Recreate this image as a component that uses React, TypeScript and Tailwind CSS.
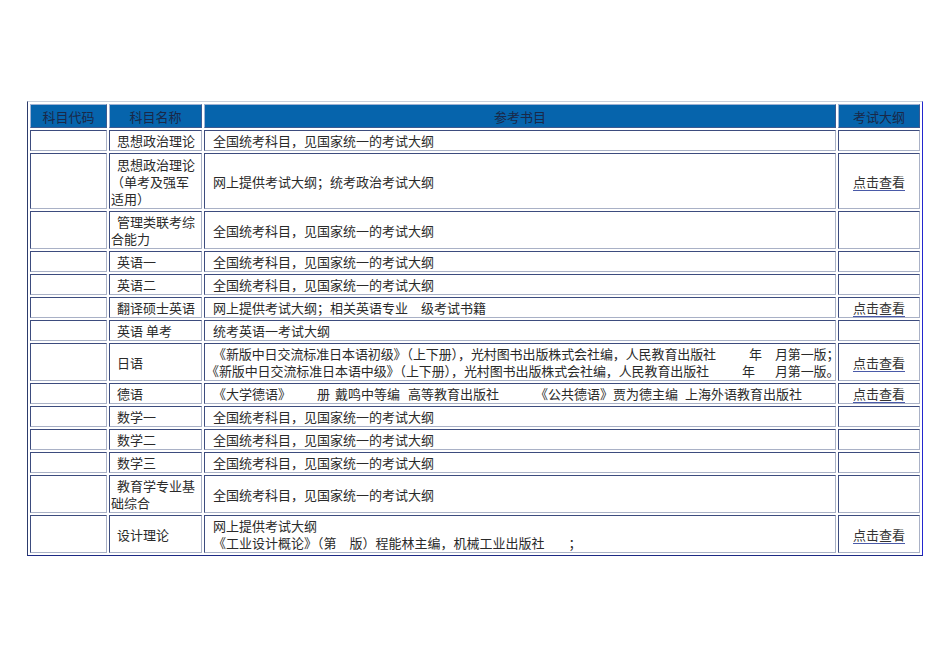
import type { ReactNode } from 'react'

// ---- EXAM SYLLABUS TABLE ----
// Old-school bordered table: subject code, subject name, reference books, syllabus link

interface Row {
  name: string[]
  lines: ReactNode[]
  indent?: boolean[]
  link?: boolean
  h: string
}

const Gap = ({ w }: { w: string }) => <span className={`inline-block ${w}`} />

const national = '全国统考科目，见国家统一的考试大纲'

const rows: Row[] = [
  { name: ['思想政治理论'], lines: [national], h: 'h-[21px]' },
  {
    name: ['思想政治理论', '（单考及强军', '适用）'],
    lines: ['网上提供考试大纲；统考政治考试大纲'],
    link: true,
    h: 'h-[56px]',
  },
  { name: ['管理类联考综', '合能力'], lines: [national], h: 'h-[38px]' },
  { name: ['英语一'], lines: [national], h: 'h-[21px]' },
  { name: ['英语二'], lines: [national], h: 'h-[21px]' },
  {
    name: ['翻译硕士英语'],
    lines: [<>网上提供考试大纲；相关英语专业<Gap w="w-[13px]" />级考试书籍</>],
    link: true,
    h: 'h-[21px]',
  },
  { name: ['英语 单考'], lines: ['统考英语一考试大纲'], h: 'h-[21px]' },
  {
    name: ['日语'],
    lines: [
      <span className="tracking-[-0.1px]">
        《新版中日交流标准日本语初级》（上下册），光村图书出版株式会社编，人民教育出版社
        <Gap w="w-[33px]" />年<Gap w="w-[13px]" />月第一版；
      </span>,
      <span className="tracking-[-0.1px]">
        《新版中日交流标准日本语中级》（上下册），光村图书出版株式会社编，人民教育出版社
        <Gap w="w-[33px]" />年<Gap w="w-[20px]" />月第一版。
      </span>,
    ],
    indent: [true, false],
    link: true,
    h: 'h-[38px]',
  },
  {
    name: ['德语'],
    lines: [
      <>
        《大学德语》<Gap w="w-[26px]" />册<Gap w="w-[5px]" />戴鸣中等编<Gap w="w-[8px]" />高等教育出版社
        <Gap w="w-[36px]" />《公共德语》贾为德主编<Gap w="w-[7px]" />上海外语教育出版社
      </>,
    ],
    link: true,
    h: 'h-[21px]',
  },
  { name: ['数学一'], lines: [national], h: 'h-[21px]' },
  { name: ['数学二'], lines: [national], h: 'h-[21px]' },
  { name: ['数学三'], lines: [national], h: 'h-[21px]' },
  { name: ['教育学专业基', '础综合'], lines: [national], h: 'h-[38px]' },
  {
    name: ['设计理论'],
    lines: [
      '网上提供考试大纲',
      <>
        《工业设计概论》（第<Gap w="w-[13px]" />版）程能林主编，机械工业出版社<Gap w="w-[24px]" />；
      </>,
    ],
    indent: [true, true],
    link: true,
    h: 'h-[38px]',
  },
]

const cell =
  'border border-t-[#3d4c7e] border-l-[#3d4c7e] border-b-[#a9b1c6] border-r-[#a9b1c6] align-middle p-0'
const head =
  'border border-t-[#9fb2d4] border-l-[#9fb2d4] border-b-[#3c5a90] border-r-[#3c5a90] bg-[#0664ac] text-[#1a2848] text-center font-normal h-[24px] p-0'

function App() {
  return (
    <div
      className="min-h-[672px] w-[950px] bg-white pt-[101px] pl-[27px] text-[13px] leading-[17px] text-[#2a2a2a]"
      style={{ fontFamily: '"Noto Sans CJK SC", "Noto Sans", sans-serif' }}
    >
      <table className="w-[896px] table-fixed border-separate border-spacing-[2px] border border-t-[#c9d0dc] border-l-[#2d3c6c] border-r-[#2326cf] border-b-[#1d2a84]">
        <colgroup>
          <col className="w-[77px]" />
          <col className="w-[93px]" />
          <col className="w-[632px]" />
          <col className="w-[82px]" />
        </colgroup>
        <thead>
          <tr>
            <th className={head}>科目代码</th>
            <th className={head}>科目名称</th>
            <th className={head}>参考书目</th>
            <th className={head}>考试大纲</th>
          </tr>
        </thead>
        <tbody>
          {rows.map((row, i) => (
            <tr key={i}>
              <td className={`${cell} ${row.h}`} />
              <td className={`${cell} ${row.h} pl-[1px]`}>
                {row.name.map((n, j) => (
                  <div key={j} className={`whitespace-nowrap ${j === 0 ? 'pl-[6px]' : ''}`}>
                    {n}
                  </div>
                ))}
              </td>
              <td className={`${cell} ${row.h}`}>
                {row.lines.map((l, j) => (
                  <div
                    key={j}
                    className={`whitespace-nowrap ${(row.indent ? row.indent[j] : true) ? 'pl-[8px]' : 'pl-[1px]'}`}
                  >
                    {l}
                  </div>
                ))}
              </td>
              <td className={`${cell} ${row.h} text-center`}>
                {row.link && (
                  <a href="#" className="text-[#333] underline decoration-[#4a5aa8] underline-offset-[3px]">
                    点击查看
                  </a>
                )}
              </td>
            </tr>
          ))}
        </tbody>
      </table>
    </div>
  )
}

export default App
